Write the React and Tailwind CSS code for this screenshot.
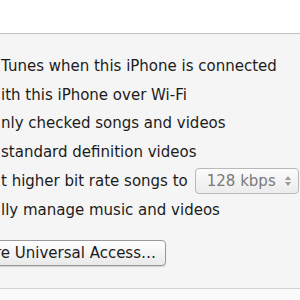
import React from 'react';

const rows = [
  ['Open i', 'Tunes when this iPhone is connected'],
  ['Sync w', 'ith this iPhone over Wi-Fi'],
  ['Sync o', 'nly checked songs and videos'],
  ['Prefer', 'standard definition videos'],
  ['Conver', 't higher bit rate songs to'],
  ['Manua', 'lly manage music and videos'],
];

// hidden start of each label sits left of the window edge
const Row = ({ prefix, text, children }) => (
  <div className="flex items-center h-[28.7px]">
    <div className="w-0 shrink-0 flex justify-end whitespace-nowrap">
      <span className="pr-[6px]">{prefix}</span>
    </div>
    <span className="ml-[1px] whitespace-nowrap">{text}</span>
    {children}
  </div>
);

const App = () => {
  return (
    <div
      className="w-[300px] h-[300px] overflow-hidden bg-white text-[15px] text-[#1c1c1c]"
      style={{ fontFamily: '"DejaVu Sans", "Liberation Sans", sans-serif' }}
    >
      <div className="h-[34px] bg-white border-b border-[#c2c2c2]" />
      <div className="h-[255px] bg-[#f5f5f5] border-b border-[#d2d2d2] pt-[18px]">
        {rows.map(([p, t], i) => (
          <Row key={i} prefix={p} text={t}>
            {i === 4 && (
              <div className="ml-[7px] w-[104px] h-[26px] shrink-0 flex items-center justify-between pl-[11px] pr-[6px] rounded-[4px] border border-[#b9b9b9] bg-gradient-to-b from-[#fbfbfb] to-[#ececec] text-[#7a7a7a]">
                <span>128 kbps</span>
                <svg width="8" height="12" viewBox="0 0 8 12">
                  <path d="M1 5 L4 1 L7 5 Z" fill="#9a9a9a" />
                  <path d="M1 7 L4 11 L7 7 Z" fill="#9a9a9a" />
                </svg>
              </div>
            )}
          </Row>
        ))}
        <div className="mt-[16px] flex">
          <div className="-ml-[70px] w-[236px] h-[26px] flex items-center justify-end pr-[9px] rounded-[4px] border border-[#9a9a9a] bg-gradient-to-b from-white to-[#e9e9e9] shadow-[0_1px_1px_rgba(0,0,0,0.15)] whitespace-nowrap">
            Configure Universal Access…
          </div>
        </div>
      </div>
      <div className="h-[11px] bg-[#fafafa]" />
    </div>
  );
};

export default App;
